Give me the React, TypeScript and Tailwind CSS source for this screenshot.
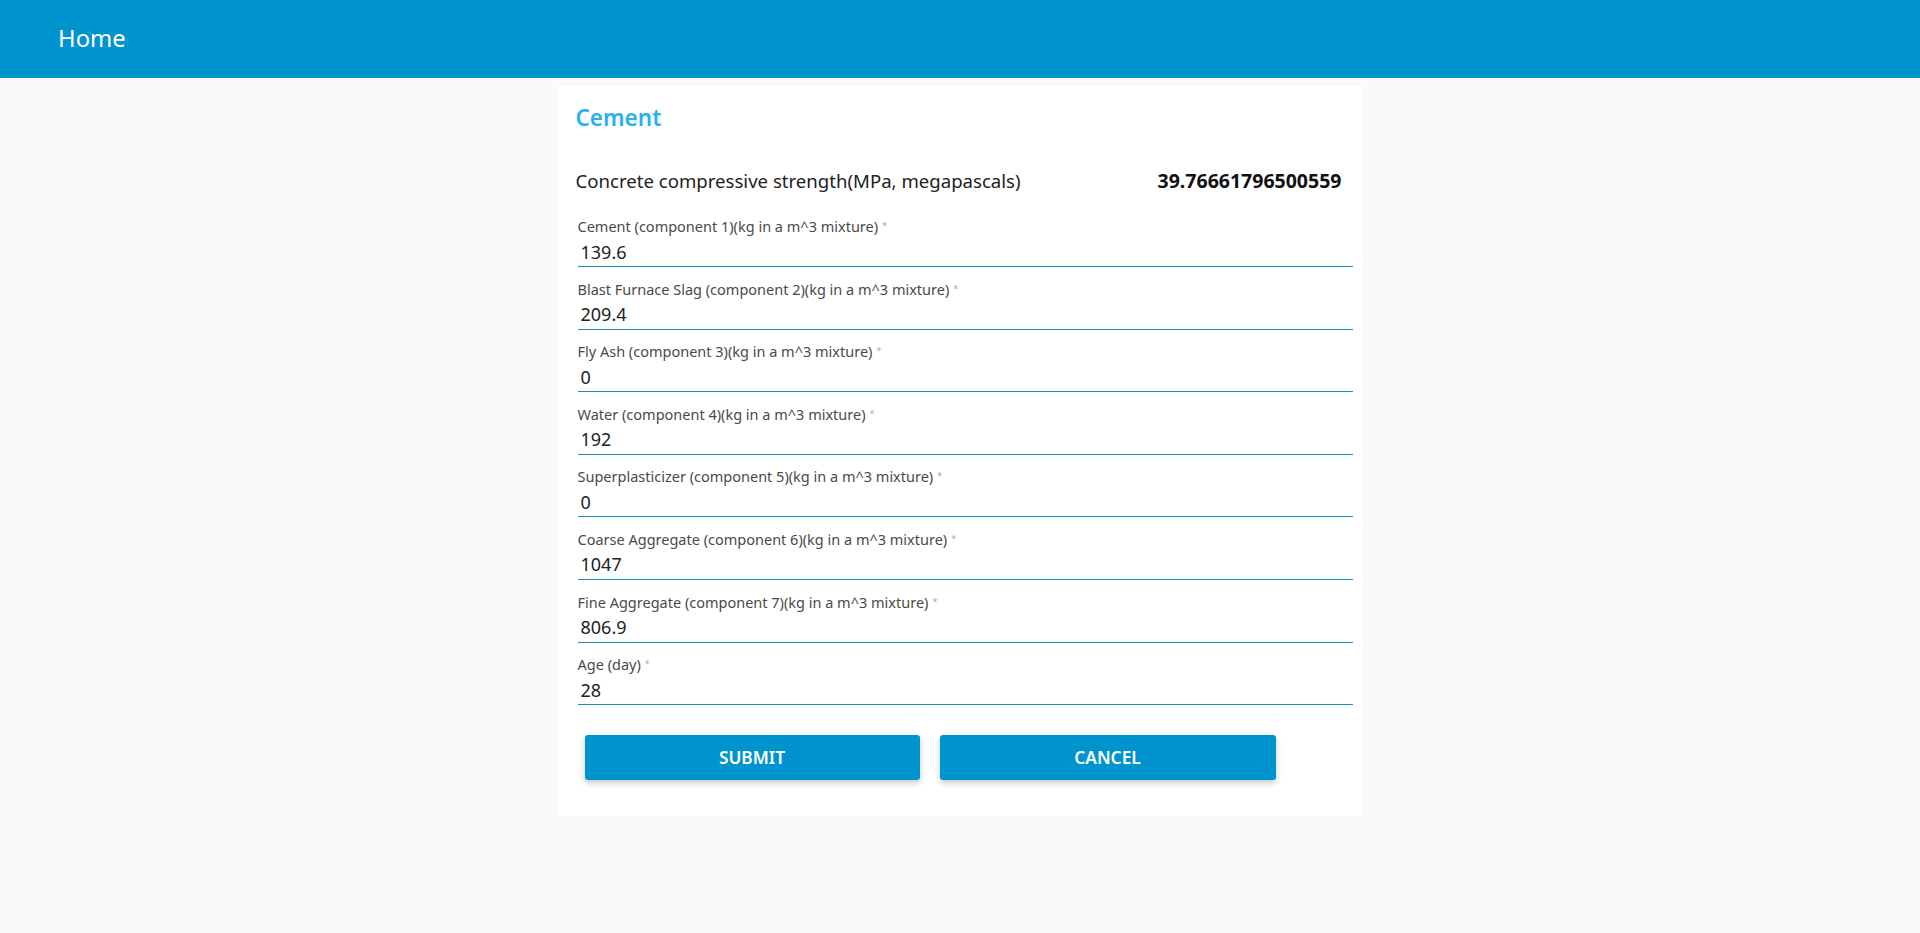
import React from "react";

const fields = [
  { label: "Cement (component 1)(kg in a m^3 mixture)", value: "139.6" },
  { label: "Blast Furnace Slag (component 2)(kg in a m^3 mixture)", value: "209.4" },
  { label: "Fly Ash (component 3)(kg in a m^3 mixture)", value: "0" },
  { label: "Water (component 4)(kg in a m^3 mixture)", value: "192" },
  { label: "Superplasticizer (component 5)(kg in a m^3 mixture)", value: "0" },
  { label: "Coarse Aggregate (component 6)(kg in a m^3 mixture)", value: "1047" },
  { label: "Fine Aggregate (component 7)(kg in a m^3 mixture)", value: "806.9" },
  { label: "Age (day)", value: "28" },
] as const;

const Field = ({ label, value }: { label: string; value: string }) => (
  <label className="flex flex-col">
    <span className="pb-[2px] text-[14.5px] leading-[18px] text-[#4a4a4a]">
      {label}
      <span className="ml-1 align-top text-[9px] text-[#aaa]">*</span>
    </span>
    <input
      defaultValue={value}
      className="h-[30px] border-b border-[#1b8cbf] bg-transparent pl-[3px] text-[18px] leading-[28px] text-[#222] outline-none"
    />
  </label>
);

const App = () => {
  return (
    <div
      className="min-h-screen bg-[#fafafa]"
      style={{ fontFamily: '"Noto Sans", "Open Sans", sans-serif' }}
    >
      <header className="flex h-[78px] items-center bg-[#0094cf] px-[58px]">
        <span className="text-[23.8px] text-white">Home</span>
      </header>
      <main className="flex justify-center pt-2">
        <div className="w-[805px] bg-white pb-[36px] pl-[18px] pr-[10px] pt-[16px]">
          <h2 className="text-[22.5px] font-semibold leading-[32px] text-[#29b1ee]">
            Cement
          </h2>
          <div className="mt-[33px] flex items-center justify-between pr-[11px]">
            <span className="text-[18.6px] leading-[28px] text-[#222]">
              Concrete compressive strength(MPa, megapascals)
            </span>
            <span className="text-[19.5px] font-bold leading-[28px] text-[#111]">
              39.76661796500559
            </span>
          </div>
          <div className="mt-[22px] flex flex-col gap-y-[12.6px] pl-[2px]">
            {fields.map((f) => (
              <Field key={f.label} label={f.label} value={f.value} />
            ))}
          </div>
          <div className="mt-[30px] flex gap-5 pl-[9px]">
            <button className="h-[45px] w-[335px] rounded-[3px] bg-[#0094cf] text-[17.3px] font-semibold text-white shadow-[0_3px_6px_rgba(0,0,0,0.22)]">
              SUBMIT
            </button>
            <button className="h-[45px] w-[336px] rounded-[3px] bg-[#0094cf] text-[17.3px] font-semibold text-white shadow-[0_3px_6px_rgba(0,0,0,0.22)]">
              CANCEL
            </button>
          </div>
        </div>
      </main>
    </div>
  );
};

export default App;
